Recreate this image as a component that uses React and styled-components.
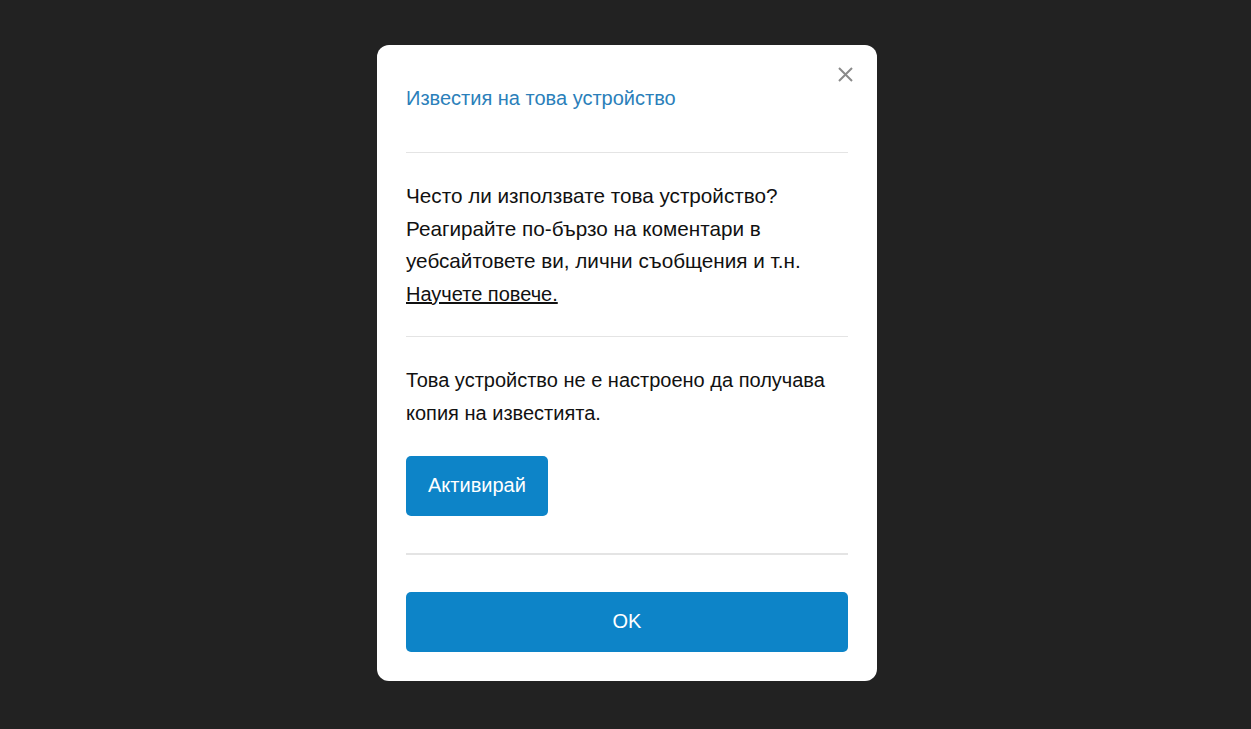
import styled, { createGlobalStyle } from "styled-components";

const GlobalStyle = createGlobalStyle`
  html, body {
    margin: 0;
    padding: 0;
    background: #222222;
    font-family: "Liberation Sans", Arial, sans-serif;
  }
`;

const Page = styled.div`
  width: 1251px;
  height: 729px;
  display: flex;
  justify-content: flex-start;
  align-items: flex-start;
  padding: 45px 0 0 377px;
  box-sizing: border-box;
`;

const Modal = styled.div`
  position: relative;
  width: 500px;
  box-sizing: border-box;
  background: #ffffff;
  border-radius: 12px;
  padding: 37px 29px 29px;
`;

const Close = styled.button`
  position: absolute;
  top: 22px;
  right: 24px;
  width: 15px;
  height: 15px;
  padding: 0;
  border: none;
  background: none;
  cursor: pointer;
  display: flex;
  align-items: center;
  justify-content: center;
`;

const Title = styled.h2`
  margin: 0;
  font-size: 20px;
  font-weight: 400;
  line-height: 32px;
  color: #2b7fba;
`;

const Divider = styled.hr`
  margin: ${({ $top }) => $top}px 0 ${({ $bottom }) => $bottom}px;
  border: none;
  border-top: ${({ $thick }) => ($thick ? 2 : 1)}px solid #e4e4e4;
`;

const Text = styled.p`
  margin: 0;
  font-size: ${({ $size }) => $size || 20}px;
  line-height: 32.6px;
  color: #111111;
`;

const Link = styled.a`
  font-size: 20px;
  color: #111111;
  text-decoration: underline;
`;

const Button = styled.button`
  display: block;
  height: 60px;
  width: ${({ $wide }) => ($wide ? "100%" : "auto")};
  margin-top: ${({ $gap }) => $gap || 0}px;
  padding: 0 22px;
  border: none;
  border-radius: 5px;
  background: #0d84c8;
  color: #ffffff;
  font-family: "Liberation Sans", Arial, sans-serif;
  font-size: 20px;
  cursor: pointer;
`;

export default function App() {
  return (
    <>
      <GlobalStyle />
      <Page>
        <Modal>
          <Close aria-label="Затвори">
            <svg width="15" height="15" viewBox="0 0 15 15">
              <path d="M1 1L14 14M14 1L1 14" stroke="#8a8a8a" strokeWidth="2" />
            </svg>
          </Close>
          <Title>Известия на това устройство</Title>
          <Divider $top={38} $bottom={27} />
          <Text $size={20.7}>
            Често ли използвате това устройство? Реагирайте по-бързо на коментари в
            уебсайтовете ви, лични съобщения и т.н.{" "}
            <Link href="#">Научете повече.</Link>
          </Text>
          <Divider $top={26} $bottom={27} />
          <Text>Това устройство не е настроено да получава копия на известията.</Text>
          <Button $gap={26}>Активирай</Button>
          <Divider $thick $top={37} $bottom={37} />
          <Button $wide>OK</Button>
        </Modal>
      </Page>
    </>
  );
}
